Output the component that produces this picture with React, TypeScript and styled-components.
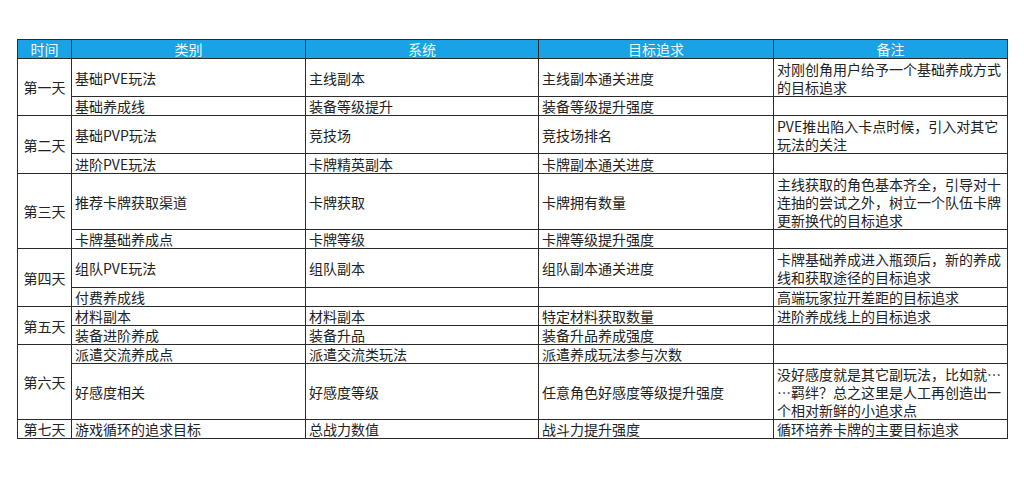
import React from "react";
import styled, { createGlobalStyle } from "styled-components";

const GlobalStyle = createGlobalStyle`
    html, body {
        margin: 0;
        padding: 0;
        background: #ffffff;
    }
    body {
        font-family: "Noto Sans CJK SC", "Noto Sans", sans-serif;
        color: #222222;
    }
`;

const Page = styled.div`
    padding: 39px 0 0 17px;
    width: 1024px;
    height: 492px;
    box-sizing: border-box;
`;

const Table = styled.table`
    border-collapse: collapse;
    table-layout: fixed;
    width: 990px;
    font-size: 14px;
    line-height: 18px;
`;

const HeadCell = styled.th`
    height: 18px;
    padding: 0;
    background: #19a3e6;
    color: #eef9ff;
    font-weight: 400;
    text-align: center;
    border: 1px solid #2b2b2b;
`;

const Row = styled.tr<{ $h: number }>`
    height: ${(p) => p.$h}px;
`;

const DayCell = styled.td`
    padding: 0;
    text-align: center;
    vertical-align: middle;
    border: 1px solid #2b2b2b;
    white-space: nowrap;
`;

const Cell = styled.td`
    padding: 0 0 0 3px;
    vertical-align: middle;
    border: 1px solid #2b2b2b;
    white-space: nowrap;
    overflow: hidden;
`;

const Line = styled.div`
    white-space: nowrap;
`;

interface Item {
    h: number;
    cat: string;
    sys: string;
    goal: string;
    note: string[];
}

interface Day {
    day: string;
    rows: Item[];
}

const days: Day[] = [
    {
        day: "第一天",
        rows: [
            { h: 38, cat: "基础PVE玩法", sys: "主线副本", goal: "主线副本通关进度", note: ["对刚创角用户给予一个基础养成方式", "的目标追求"] },
            { h: 19, cat: "基础养成线", sys: "装备等级提升", goal: "装备等级提升强度", note: [] },
        ],
    },
    {
        day: "第二天",
        rows: [
            { h: 38, cat: "基础PVP玩法", sys: "竞技场", goal: "竞技场排名", note: ["PVE推出陷入卡点时候，引入对其它", "玩法的关注"] },
            { h: 20, cat: "进阶PVE玩法", sys: "卡牌精英副本", goal: "卡牌副本通关进度", note: [] },
        ],
    },
    {
        day: "第三天",
        rows: [
            {
                h: 56,
                cat: "推荐卡牌获取渠道",
                sys: "卡牌获取",
                goal: "卡牌拥有数量",
                note: ["主线获取的角色基本齐全，引导对十", "连抽的尝试之外，树立一个队伍卡牌", "更新换代的目标追求"],
            },
            { h: 19, cat: "卡牌基础养成点", sys: "卡牌等级", goal: "卡牌等级提升强度", note: [] },
        ],
    },
    {
        day: "第四天",
        rows: [
            { h: 39, cat: "组队PVE玩法", sys: "组队副本", goal: "组队副本通关进度", note: ["卡牌基础养成进入瓶颈后，新的养成", "线和获取途径的目标追求"] },
            { h: 18, cat: "付费养成线", sys: "", goal: "", note: ["高端玩家拉开差距的目标追求"] },
        ],
    },
    {
        day: "第五天",
        rows: [
            { h: 18, cat: "材料副本", sys: "材料副本", goal: "特定材料获取数量", note: ["进阶养成线上的目标追求"] },
            { h: 19, cat: "装备进阶养成", sys: "装备升品", goal: "装备升品养成强度", note: [] },
        ],
    },
    {
        day: "第六天",
        rows: [
            { h: 19, cat: "派遣交流养成点", sys: "派遣交流类玩法", goal: "派遣养成玩法参与次数", note: [] },
            {
                h: 56,
                cat: "好感度相关",
                sys: "好感度等级",
                goal: "任意角色好感度等级提升强度",
                note: ["没好感度就是其它副玩法，比如就…", "…羁绊？总之这里是人工再创造出一", "个相对新鲜的小追求点"],
            },
        ],
    },
    {
        day: "第七天",
        rows: [{ h: 18, cat: "游戏循环的追求目标", sys: "总战力数值", goal: "战斗力提升强度", note: ["循环培养卡牌的主要目标追求"] }],
    },
];

const headers = ["时间", "类别", "系统", "目标追求", "备注"];
const widths = [54, 234, 233, 235, 234];

export default function App() {
    return (
        <>
            <GlobalStyle />
            <Page>
                <Table>
                    <colgroup>
                        {widths.map((w, i) => (
                            <col key={i} style={{ width: w }} />
                        ))}
                    </colgroup>
                    <thead>
                        <tr>
                            {headers.map((h) => (
                                <HeadCell key={h}>{h}</HeadCell>
                            ))}
                        </tr>
                    </thead>
                    <tbody>
                        {days.map((d) =>
                            d.rows.map((r, i) => (
                                <Row key={d.day + i} $h={r.h}>
                                    {i === 0 && <DayCell rowSpan={d.rows.length}>{d.day}</DayCell>}
                                    <Cell>{r.cat}</Cell>
                                    <Cell>{r.sys}</Cell>
                                    <Cell>{r.goal}</Cell>
                                    <Cell>
                                        {r.note.map((n) => (
                                            <Line key={n}>{n}</Line>
                                        ))}
                                    </Cell>
                                </Row>
                            ))
                        )}
                    </tbody>
                </Table>
            </Page>
        </>
    );
}
